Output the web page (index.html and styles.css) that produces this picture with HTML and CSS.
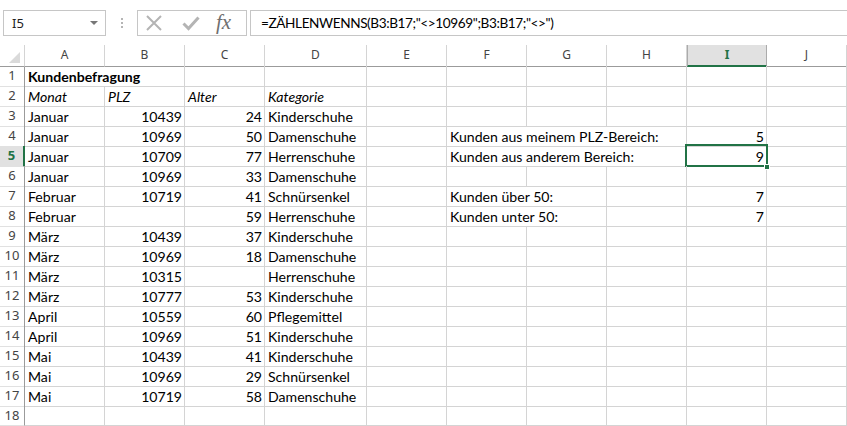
FILE: index.html
```html
<!DOCTYPE html>
<html lang="de">
<head>
<meta charset="utf-8">
<title>Kundenbefragung</title>
<link rel="stylesheet" href="styles.css">
</head>
<body>
<div class="toolbar">
  <div class="namebox">
    <span class="name">I5</span>
    <span class="dropdown"></span>
  </div>
  <div class="grip"><i></i><i></i><i></i></div>
  <div class="buttons">
    <svg class="icon-x" width="18" height="18" viewBox="0 0 18 18"><path d="M2 2 L16 16 M16 2 L2 16" stroke="#b4b4b4" stroke-width="2" fill="none"/></svg>
    <svg class="icon-ok" width="18" height="16" viewBox="0 0 18 16"><path d="M1.5 8.5 L6.5 13.5 L16.5 2.5" stroke="#b4b4b4" stroke-width="3" fill="none"/></svg>
    <span class="fx">fx</span>
  </div>
  <div class="formula">=ZÄHLENWENNS(B3:B17;"&lt;&gt;10969";B3:B17;"&lt;&gt;")</div>
</div>

<div class="sheet">
  <div class="row head">
    <div class="corner"><span class="tri"></span></div>
    <div class="ch">A</div><div class="ch">B</div><div class="ch">C</div><div class="ch">D</div><div class="ch">E</div><div class="ch">F</div><div class="ch">G</div><div class="ch">H</div><div class="ch sel">I</div><div class="ch">J</div>
  </div>

  <div class="row">
    <div class="rh">1</div>
    <div class="c b2 bold">Kundenbefragung</div><div class="c"></div><div class="c"></div><div class="c"></div><div class="c"></div><div class="c"></div><div class="c"></div><div class="c"></div><div class="c"></div>
  </div>
  <div class="row">
    <div class="rh">2</div>
    <div class="c it">Monat</div><div class="c it">PLZ</div><div class="c it">Alter</div><div class="c it">Kategorie</div><div class="c"></div><div class="c"></div><div class="c"></div><div class="c"></div><div class="c"></div><div class="c"></div>
  </div>
  <div class="row">
    <div class="rh">3</div>
    <div class="c">Januar</div><div class="c n">10439</div><div class="c n">24</div><div class="c">Kinderschuhe</div><div class="c"></div><div class="c"></div><div class="c"></div><div class="c"></div><div class="c"></div><div class="c"></div>
  </div>
  <div class="row">
    <div class="rh">4</div>
    <div class="c">Januar</div><div class="c n">10969</div><div class="c n">50</div><div class="c">Damenschuhe</div><div class="c"></div><div class="c b3">Kunden aus meinem PLZ-Bereich:</div><div class="c n">5</div><div class="c"></div>
  </div>
  <div class="row">
    <div class="rh sel">5</div>
    <div class="c">Januar</div><div class="c n">10709</div><div class="c n">77</div><div class="c">Herrenschuhe</div><div class="c"></div><div class="c b3">Kunden aus anderem Bereich:</div><div class="c n active">9<span class="handle"></span></div><div class="c"></div>
  </div>
  <div class="row">
    <div class="rh">6</div>
    <div class="c">Januar</div><div class="c n">10969</div><div class="c n">33</div><div class="c">Damenschuhe</div><div class="c"></div><div class="c"></div><div class="c"></div><div class="c"></div><div class="c"></div><div class="c"></div>
  </div>
  <div class="row">
    <div class="rh">7</div>
    <div class="c">Februar</div><div class="c n">10719</div><div class="c n">41</div><div class="c">Schnürsenkel</div><div class="c"></div><div class="c b2">Kunden über 50:</div><div class="c"></div><div class="c n">7</div><div class="c"></div>
  </div>
  <div class="row">
    <div class="rh">8</div>
    <div class="c">Februar</div><div class="c n"></div><div class="c n">59</div><div class="c">Herrenschuhe</div><div class="c"></div><div class="c b2">Kunden unter 50:</div><div class="c"></div><div class="c n">7</div><div class="c"></div>
  </div>
  <div class="row">
    <div class="rh">9</div>
    <div class="c">März</div><div class="c n">10439</div><div class="c n">37</div><div class="c">Kinderschuhe</div><div class="c"></div><div class="c"></div><div class="c"></div><div class="c"></div><div class="c"></div><div class="c"></div>
  </div>
  <div class="row">
    <div class="rh">10</div>
    <div class="c">März</div><div class="c n">10969</div><div class="c n">18</div><div class="c">Damenschuhe</div><div class="c"></div><div class="c"></div><div class="c"></div><div class="c"></div><div class="c"></div><div class="c"></div>
  </div>
  <div class="row">
    <div class="rh">11</div>
    <div class="c">März</div><div class="c n">10315</div><div class="c n"></div><div class="c">Herrenschuhe</div><div class="c"></div><div class="c"></div><div class="c"></div><div class="c"></div><div class="c"></div><div class="c"></div>
  </div>
  <div class="row">
    <div class="rh">12</div>
    <div class="c">März</div><div class="c n">10777</div><div class="c n">53</div><div class="c">Kinderschuhe</div><div class="c"></div><div class="c"></div><div class="c"></div><div class="c"></div><div class="c"></div><div class="c"></div>
  </div>
  <div class="row">
    <div class="rh">13</div>
    <div class="c">April</div><div class="c n">10559</div><div class="c n">60</div><div class="c">Pflegemittel</div><div class="c"></div><div class="c"></div><div class="c"></div><div class="c"></div><div class="c"></div><div class="c"></div>
  </div>
  <div class="row">
    <div class="rh">14</div>
    <div class="c">April</div><div class="c n">10969</div><div class="c n">51</div><div class="c">Kinderschuhe</div><div class="c"></div><div class="c"></div><div class="c"></div><div class="c"></div><div class="c"></div><div class="c"></div>
  </div>
  <div class="row">
    <div class="rh">15</div>
    <div class="c">Mai</div><div class="c n">10439</div><div class="c n">41</div><div class="c">Kinderschuhe</div><div class="c"></div><div class="c"></div><div class="c"></div><div class="c"></div><div class="c"></div><div class="c"></div>
  </div>
  <div class="row">
    <div class="rh">16</div>
    <div class="c">Mai</div><div class="c n">10969</div><div class="c n">29</div><div class="c">Schnürsenkel</div><div class="c"></div><div class="c"></div><div class="c"></div><div class="c"></div><div class="c"></div><div class="c"></div>
  </div>
  <div class="row">
    <div class="rh">17</div>
    <div class="c">Mai</div><div class="c n">10719</div><div class="c n">58</div><div class="c">Damenschuhe</div><div class="c"></div><div class="c"></div><div class="c"></div><div class="c"></div><div class="c"></div><div class="c"></div>
  </div>
  <div class="row">
    <div class="rh">18</div>
    <div class="c"></div><div class="c"></div><div class="c"></div><div class="c"></div><div class="c"></div><div class="c"></div><div class="c"></div><div class="c"></div><div class="c"></div><div class="c"></div>
  </div>
</div>
</body>
</html>
```

FILE: styles.css
```css
* { box-sizing: border-box; }
html, body { margin: 0; padding: 0; background: #fff; }
body { width: 847px; height: 426px; overflow: hidden; font-family: Lato, "Liberation Sans", sans-serif; }

.toolbar {
  height: 45px;
  display: flex;
  align-items: flex-start;
  padding: 10px 0 0 3px;
}
.namebox {
  position: relative;
  width: 103px;
  height: 26px;
  border: 1px solid #c6c6c6;
  display: flex;
  align-items: center;
  padding-left: 8px;
  font-family: "Noto Sans", sans-serif;
  font-size: 13px;
  color: #222;
}
.dropdown {
  position: absolute;
  right: 7px;
  top: 10px;
  width: 0; height: 0;
  border-left: 4px solid transparent;
  border-right: 4px solid transparent;
  border-top: 4px solid #777;
}
.grip {
  width: 31px;
  height: 26px;
  display: flex;
  flex-direction: column;
  align-items: center;
  justify-content: center;
  gap: 2px;
}
.grip i { display: block; width: 2px; height: 2px; background: #b5b5b5; }
.buttons {
  width: 110px;
  height: 26px;
  border: 1px solid #c6c6c6;
  display: flex;
  align-items: center;
  padding-left: 7px;
}
.icon-x { margin-right: 19px; }
.icon-ok { margin-right: 16px; }
.fx {
  font-family: "Liberation Serif", serif;
  font-style: italic;
  font-size: 21px;
  color: #6f6f6f;
  line-height: 1;
  margin-top: -2px;
}
.formula {
  flex: 1;
  margin-left: 3px;
  margin-right: -2px;
  height: 26px;
  border: 1px solid #c6c6c6;
  padding-left: 10px;
  font-size: 13.6px;
  letter-spacing: -0.4px;
  line-height: 24px;
  color: #000;
  white-space: nowrap;
}

.row {
  display: grid;
  grid-template-columns: 25px 80px 80px 80px 102px 80px 80px 80px 80px 80px 80px;
  height: 20px;
}
.row.head { height: 21px; }

.corner {
  position: relative;
  border-right: 1px solid #d4d4d4;
  border-bottom: 1px solid #9b9b9b;
}
.tri {
  position: absolute;
  right: 4px; bottom: 3px;
  width: 0; height: 0;
  border-left: 11px solid transparent;
  border-bottom: 11px solid #dadada;
}
.ch {
  border-right: 1px solid #d4d4d4;
  border-bottom: 1px solid #9b9b9b;
  text-align: center;
  font-family: "Noto Sans", sans-serif;
  font-size: 12px;
  line-height: 20px;
  color: #444;
}
.ch.sel {
  background: #e1e1e1;
  color: #217346;
  font-weight: bold;
  border-bottom: 2px solid #217346;
  border-right-color: #ababab;
  border-left: 1px solid #ababab;
}

.rh {
  border-right: 1px solid #9b9b9b;
  border-bottom: 1px solid #e1e1e1;
  text-align: center;
  font-family: "Noto Sans", sans-serif;
  font-size: 13px;
  line-height: 19px;
  color: #444;
}
.rh.sel {
  background: #e1e1e1;
  color: #217346;
  font-weight: bold;
  border-right: 2px solid #217346;
}

.c {
  position: relative;
  border-right: 1px solid #d4d4d4;
  border-bottom: 1px solid #d4d4d4;
  padding: 1px 3px 0 3px;
  font-size: 14.1px;
  line-height: 19px;
  color: #000;
  white-space: nowrap;
  overflow: visible;
}
.c.n { text-align: right; padding-right: 2px; }
.b2 { grid-column: span 2; }
.b3 { grid-column: span 3; }
.bold { font-weight: bold; }
.it { font-style: italic; }

.active::before {
  content: "";
  position: absolute;
  left: -2px; top: -2px; right: -2px; bottom: -1px;
  border: 2px solid #217346;
}
.handle {
  position: absolute;
  right: -4px; bottom: -4px;
  width: 6px; height: 6px;
  background: #217346;
  border: 1px solid #fff;
  z-index: 2;
}
```
